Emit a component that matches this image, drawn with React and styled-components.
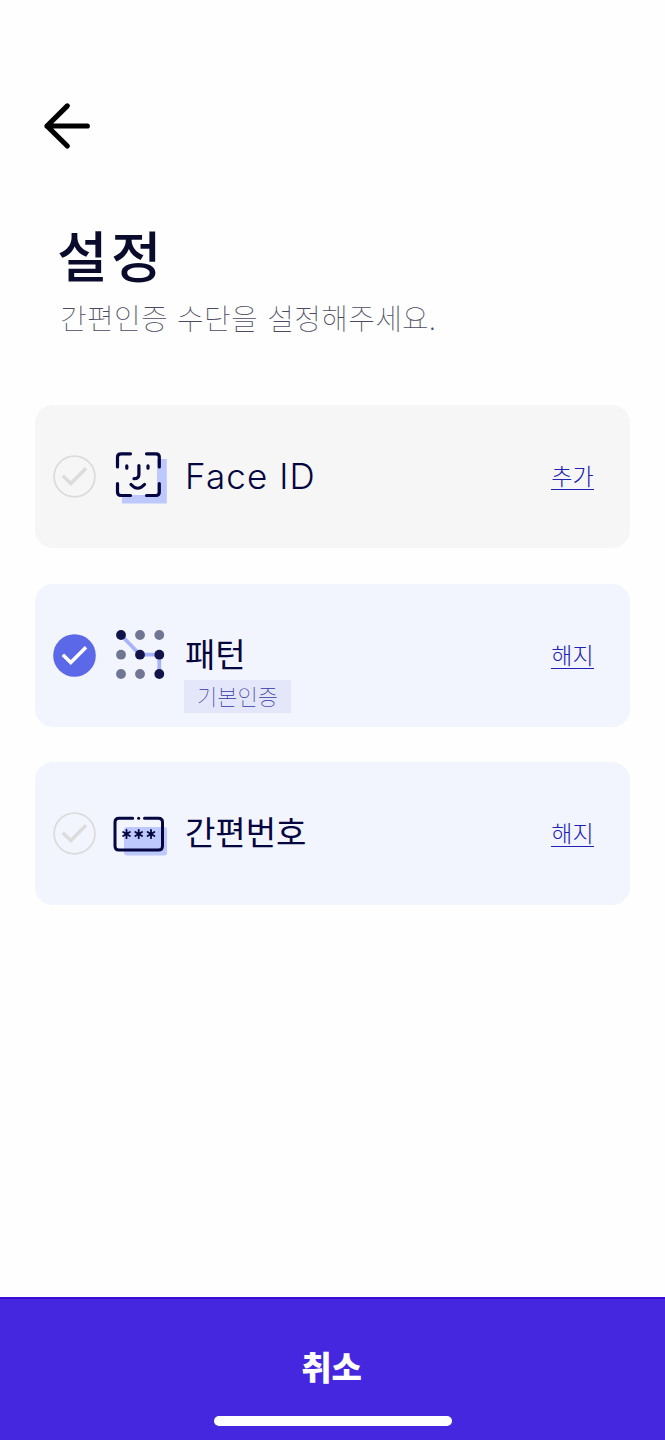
import styled, { createGlobalStyle } from "styled-components";

const GlobalStyle = createGlobalStyle`
    * { box-sizing: border-box; }
    body {
        margin: 0;
        background: #fefefe;
        font-family: "Noto Sans CJK KR", sans-serif;
    }
`;

const Container = styled.div`
    width: 665px;
    height: 1440px;
    display: flex;
    flex-direction: column;
    background: #fefefe;
    overflow: hidden;
`;

const BackButton = styled.button`
    width: 50px;
    height: 50px;
    margin: 101px 0 0 42px;
    padding: 0;
    border: 0;
    background: none;
    svg { display: block; }
`;

const Header = styled.header`
    height: 254px;
    padding: 62px 0 0 57px;
`;

const Title = styled.h1`
    margin: 0;
    font-size: 55px;
    line-height: 80px;
    font-weight: 500;
    letter-spacing: 3.5px;
    color: #0b0b2b;
    white-space: nowrap;
`;

const Desc = styled.p`
    margin: 4px 0 0 3px;
    font-size: 29px;
    line-height: 40px;
    font-weight: 100;
    letter-spacing: 0.3px;
    word-spacing: 2.5px;
    color: #4c4a60;
    white-space: nowrap;
`;

const List = styled.ul`
    flex: 1;
    margin: 0;
    padding: 0 35px;
    list-style: none;
    display: flex;
    flex-direction: column;
    gap: 35.7px;
`;

const Card = styled.li`
    height: 143px;
    padding: 0 36px 0 18px;
    display: flex;
    align-items: center;
    border-radius: 18px;
    background: ${props => props.$disabled ? "#f6f6f6" : "#f2f5fe"};
`;

const CheckIcon = styled.svg`
    width: 43px;
    height: 43px;
    margin-right: 14px;
    flex: none;
`;

const MethodIcon = styled.svg`
    width: 60px;
    height: 60px;
    margin-right: 15px;
    flex: none;
`;

const Name = styled.div`
    position: relative;
    flex: 1;
    padding-bottom: ${props => props.$latin ? "2px" : "5px"};
    font-family: ${props => props.$latin ? "Inter, sans-serif" : "inherit"};
    font-size: ${props => props.$latin ? "35px" : "33px"};
    line-height: 48px;
    font-weight: ${props => props.$latin ? 300 : 400};
    letter-spacing: ${props => props.$latin ? "1.1px" : "0"};
    color: #05053f;
    white-space: nowrap;
`;

const Badge = styled.span`
    position: absolute;
    top: 51px;
    left: -1px;
    width: 107px;
    height: 33px;
    font-size: 22px;
    line-height: 30px;
    font-weight: 100;
    text-align: center;
    color: #3437a4;
    background: #e4e6fa;
`;

const Action = styled.button`
    width: 43px;
    height: 27px;
    padding: 0 0 2px;
    border: 0;
    border-bottom: 1.5px solid #2020b4;
    background: none;
    font-family: inherit;
    font-size: 23px;
    line-height: 24px;
    font-weight: 300;
    color: #2020b4;
    white-space: nowrap;
`;

const Footer = styled.footer`
    height: 143px;
    display: flex;
    flex-direction: column;
    align-items: center;
    border-top: 2px solid #3a0bd6;
    background: #4527df;
`;

const Cancel = styled.button`
    height: 60px;
    margin: 37px 2px 0 0;
    padding: 0;
    border: 0;
    background: none;
    font-family: inherit;
    font-size: 33px;
    line-height: 60px;
    font-weight: 900;
    color: #fff;
`;

const HomeBar = styled.div`
    width: 238px;
    height: 10px;
    margin-top: 20px;
    border-radius: 5px;
    background: #fff;
`;

const Check = ({ checked }) => (
    <CheckIcon viewBox="0 0 43 43" fill="none">
        <circle cx="21.5" cy="21.5" r={checked ? 21.3 : 20.4} fill={checked ? "#5b69e8" : "none"} stroke={checked ? "none" : "#dcdcdc"} strokeWidth="1.8" />
        <path d="M9.8 20.7L17.8 28.5L33 13.2" stroke={checked ? "#fff" : "#dcdcdc"} strokeWidth="3.5" />
    </CheckIcon>
);

const FaceIcon = () => (
    <MethodIcon viewBox="0 0 60 60" fill="none">
        <path d="M12 56.5V48H47V12H56.8V56.5Z" fill="#bdc9fc" />
        <g stroke="#05053f" strokeWidth="3.2" strokeLinecap="round" strokeLinejoin="round">
            <path d="M7.5 20V10Q7.5 6.8 11 6.8H20.5M36.5 6.8H46Q49.3 6.8 49.3 10V20M49.3 36.5V45Q49.3 48.5 46 48.5H36.5M20.5 48.5H11Q7.5 48.5 7.5 45V36.5" />
            <path d="M16.8 18.8V21.2M38 18.8V21.2M28.9 18.5V27.5Q28.9 31.7 24 31.7" />
            <path d="M21 37.5Q27.7 45 34.5 37.5" />
        </g>
    </MethodIcon>
);

const dots = [
    [11, 10, 1], [30, 10, 0], [49.3, 10, 0],
    [11, 29.7, 0], [30, 29.7, 1], [49.3, 29.7, 1],
    [11, 49, 0], [30, 49, 0], [49.3, 49, 1],
];

const PatternIcon = () => (
    <MethodIcon viewBox="0 0 60 60" fill="none">
        <path d="M11 10L30 29.7H49.3V49" stroke="#a8b2fb" strokeWidth="3.8" />
        {dots.map(([x, y, on]) => (
            <circle key={`${x}-${y}`} cx={x} cy={y} r="4.9" fill={on ? "#121449" : "#717594"} />
        ))}
    </MethodIcon>
);

const PinIcon = () => (
    <MethodIcon viewBox="0 0 60 60" fill="none">
        <rect x="14" y="23" width="43" height="28.5" rx="3" fill="#bdc9fc" />
        <g stroke="#05053f" strokeWidth="3" strokeLinecap="round">
            <path d="M22.7 14.2H9Q5 14.2 5 18.2V42Q5 46 9 46H48.5Q52.5 46 52.5 42V18.2Q52.5 14.2 48.5 14.2H34.5" />
            <path d="M28.6 14.2H28.7" />
        </g>
        <g stroke="#05053f" strokeWidth="1.8" strokeLinecap="round">
            {[16.5, 28.7, 41].map(x => (
                <path key={x} d={`M${x} 25.8V34.2M${x - 3.4} 27.9L${x + 3.4} 32.1M${x + 3.4} 27.9L${x - 3.4} 32.1`} />
            ))}
        </g>
    </MethodIcon>
);

const methods = [
    { name: "Face ID", action: "추가", Icon: FaceIcon, latin: true, disabled: true },
    { name: "패턴", action: "해지", Icon: PatternIcon, checked: true, badge: "기본인증" },
    { name: "간편번호", action: "해지", Icon: PinIcon },
];

const App = () => {
    return (
        <>
            <GlobalStyle />
            <Container>
                <BackButton aria-label="뒤로">
                    <svg width="50" height="50" viewBox="0 0 50 50" fill="none" stroke="#000" strokeWidth="5.2" strokeLinecap="round" strokeLinejoin="round">
                        <path d="M25.3 4.9L5 25L25.3 45M5 25H45.3" />
                    </svg>
                </BackButton>
                <Header>
                    <Title>설정</Title>
                    <Desc>간편인증 수단을 설정해주세요.</Desc>
                </Header>
                <List>
                    {methods.map(({ name, action, Icon, latin, disabled, checked, badge }) => (
                        <Card key={name} $disabled={disabled}>
                            <Check checked={checked} />
                            <Icon />
                            <Name $latin={latin}>
                                {name}
                                {badge && <Badge>{badge}</Badge>}
                            </Name>
                            <Action>{action}</Action>
                        </Card>
                    ))}
                </List>
                <Footer>
                    <Cancel>취소</Cancel>
                    <HomeBar />
                </Footer>
            </Container>
        </>
    )
}

export default App
